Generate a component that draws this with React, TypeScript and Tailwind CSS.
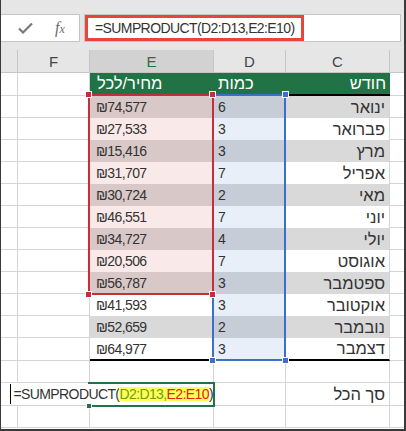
import React from 'react';

const months = ['ינואר', 'פברואר', 'מרץ', 'אפריל', 'מאי', 'יוני', 'יולי', 'אוגוסט', 'ספטמבר', 'אוקטובר', 'נובמבר', 'דצמבר'];
const qty = [6, 3, 3, 7, 2, 7, 4, 7, 3, 3, 2, 3];
const prices = ['74,577', '27,533', '15,416', '31,707', '30,724', '46,551', '34,727', '20,506', '56,787', '41,593', '52,659', '64,977'];

const GRID = 'border-[#d4d4d4]';
const HEB = 'text-[16.5px] tracking-normal';

function FormulaBar() {
  return (
    <div className="flex h-[50px] bg-[#e6e6e6] pt-[14px]">
      <div className="flex h-[28px] w-[80px] items-center border-y border-r border-[#c6c6c6] bg-white">
        <svg className="ml-[18px]" width="15" height="12" viewBox="0 0 15 12">
          <path d="M1 6.5 L5 10.5 L14 1.5" fill="none" stroke="#7a7a7a" strokeWidth="2.2" />
        </svg>
        <span className="ml-[22px] font-['Liberation_Serif',serif] text-[16px] italic leading-none tracking-normal text-[#6c6c6c]">
          f<span className="text-[12px]">x</span>
        </span>
      </div>
      <div className="ml-[4px] mr-[5px] flex h-[28px] flex-1 border border-[#c6c6c6] bg-white">
        <div className="flex items-center border-[3px] border-[#e8463d] pl-[7px] pr-[6px]">
          =SUMPRODUCT(D2:D13,E2:E10)
        </div>
      </div>
    </div>
  );
}

function ColumnHeaders() {
  return (
    <div className="flex h-[23px] border-b border-[#c6c6c6] bg-[#e6e6e6] text-[15px] tracking-normal text-[#444]">
      <div className="w-[18px] border-r border-[#c6c6c6]" />
      <div className="flex w-[72px] items-center justify-center border-r border-[#c6c6c6]">F</div>
      <div className="flex w-[124px] items-center justify-center border-r border-[#c6c6c6] bg-[#d2d2d2] text-[#217346]">E</div>
      <div className="flex w-[72px] items-center justify-center border-r border-[#c6c6c6]">D</div>
      <div className="flex w-[104px] items-center justify-center border-r border-[#c6c6c6]">C</div>
      <div className="flex-1" />
    </div>
  );
}

function TableHeader() {
  return (
    <div className={`flex h-[23px] text-white ${HEB}`}>
      <div className={`w-[18px] border-b border-r ${GRID}`} />
      <div className={`w-[72px] border-b border-r ${GRID}`} />
      <div className="flex w-[124px] items-center border-b-2 border-black bg-[#217346] pl-[7px]">מחיר/לכל</div>
      <div className="flex w-[72px] items-center border-b-2 border-black bg-[#217346] pl-[4px]">כמות</div>
      <div className="flex w-[104px] items-center justify-end border-b-2 border-black bg-[#217346] pr-[4px]">חודש</div>
      <div className={`flex-1 border-b ${GRID}`} />
    </div>
  );
}

function DataRow({ i }: { i: number }) {
  const gray = i % 2 === 0;
  const last = i === 11;
  const inRed = i < 9;
  const eBg = inRed ? (gray ? 'bg-[#d9c8c8]' : 'bg-[#f9e9e9]') : gray ? 'bg-[#d9d9d9]' : 'bg-white';
  const dBg = gray ? 'bg-[#c6cdd7]' : 'bg-[#e8eff9]';
  const cBg = gray ? 'bg-[#d9d9d9]' : 'bg-white';
  return (
    <div className={`flex ${last ? 'h-[23px]' : 'h-[22px]'}`}>
      <div className={`w-[18px] border-b border-r ${GRID}`} />
      <div className={`w-[72px] border-b border-r ${GRID}`} />
      <div className={`flex w-[124px] items-center pl-[6px] ${eBg} ${last ? 'border-b-2 border-black' : ''}`}>
        ₪{prices[i]}
      </div>
      <div className={`flex w-[72px] items-center pl-[4px] ${dBg} ${last ? 'border-b-2 border-black' : ''}`}>{qty[i]}</div>
      <div
        dir="rtl"
        className={`flex w-[104px] items-center border-r pr-[4px] ${HEB} ${GRID} ${cBg} ${last ? 'border-b-2 border-b-black' : ''}`}
      >
        {months[i]}
      </div>
      <div className={`flex-1 border-b ${GRID}`} />
    </div>
  );
}

function PlainRow({ h, e, c }: { h: string; e?: React.ReactNode; c?: string }) {
  return (
    <div className={`flex ${h}`}>
      <div className={`w-[18px] border-b border-r ${GRID}`} />
      <div className={`w-[72px] border-b border-r ${GRID}`} />
      <div className={`flex w-[124px] items-center justify-end border-b border-r ${GRID}`}>{e}</div>
      <div className={`w-[72px] border-b border-r ${GRID}`} />
      <div dir="rtl" className={`flex w-[104px] items-center border-b border-r pr-[4px] ${HEB} ${GRID}`}>
        {c}
      </div>
      <div className={`flex-1 border-b ${GRID}`} />
    </div>
  );
}

function EditingFormula() {
  return (
    <div className="flex h-full items-center whitespace-nowrap bg-white pl-[1px]">
      <span className="mr-[2px] h-[20px] w-px bg-black" />
      =SUMPRODUCT(
      <span className="inline-flex h-[14px] items-center bg-[#ffff5a]">
        <span className="text-[#6f9c12]">D2:D13,</span>
        <span className="text-[#e0231c]">E2:E10</span>
      </span>
      )
    </div>
  );
}

function Handle({ pos, color }: { pos: string; color: string }) {
  return <div className={`absolute h-[7px] w-[7px] border border-white ${color} ${pos}`} />;
}

function Selections() {
  return (
    <div className="pointer-events-none absolute inset-0">
      <div className="absolute left-[212px] top-[94px] h-[267px] w-[74px] border-2 border-[#3b70c6]" />
      <div className="absolute left-[88px] top-[94px] h-[201px] w-[126px] border-2 border-[#c3303a]" />
      <Handle pos="left-[282px] top-[91px]" color="bg-[#3b70c6]" />
      <Handle pos="left-[282px] top-[357px]" color="bg-[#3b70c6]" />
      <Handle pos="left-[209px] top-[357px]" color="bg-[#3b70c6]" />
      <Handle pos="left-[85px] top-[91px]" color="bg-[#c3303a]" />
      <Handle pos="left-[209px] top-[91px]" color="bg-[#c3303a]" />
      <Handle pos="left-[85px] top-[291px]" color="bg-[#c3303a]" />
      <Handle pos="left-[209px] top-[291px]" color="bg-[#c3303a]" />
      {/* active cell */}
      <div className="absolute left-[88px] top-[382px] h-[25px] w-[127px] border-2 border-l-0 border-[#217346]" />
      <div className="absolute left-[86px] top-[403px] h-[6px] w-[6px] border border-white bg-[#217346]" />
    </div>
  );
}

export default function App() {
  return (
    <div className="relative h-[431px] w-[406px] overflow-hidden bg-white font-['Liberation_Sans',sans-serif] text-[14px] leading-none tracking-[-0.6px] text-[#333]">
      <FormulaBar />
      <ColumnHeaders />
      <TableHeader />
      {months.map((_, i) => (
        <DataRow key={i} i={i} />
      ))}
      <PlainRow h="h-[22px]" />
      <PlainRow h="h-[23px]" e={<EditingFormula />} c="סך הכל" />
      <PlainRow h="h-[22px]" />
      <Selections />
      <div className="pointer-events-none absolute inset-0 border-b-2 border-l border-r-2 border-[#3a3a3a]" />
    </div>
  );
}
